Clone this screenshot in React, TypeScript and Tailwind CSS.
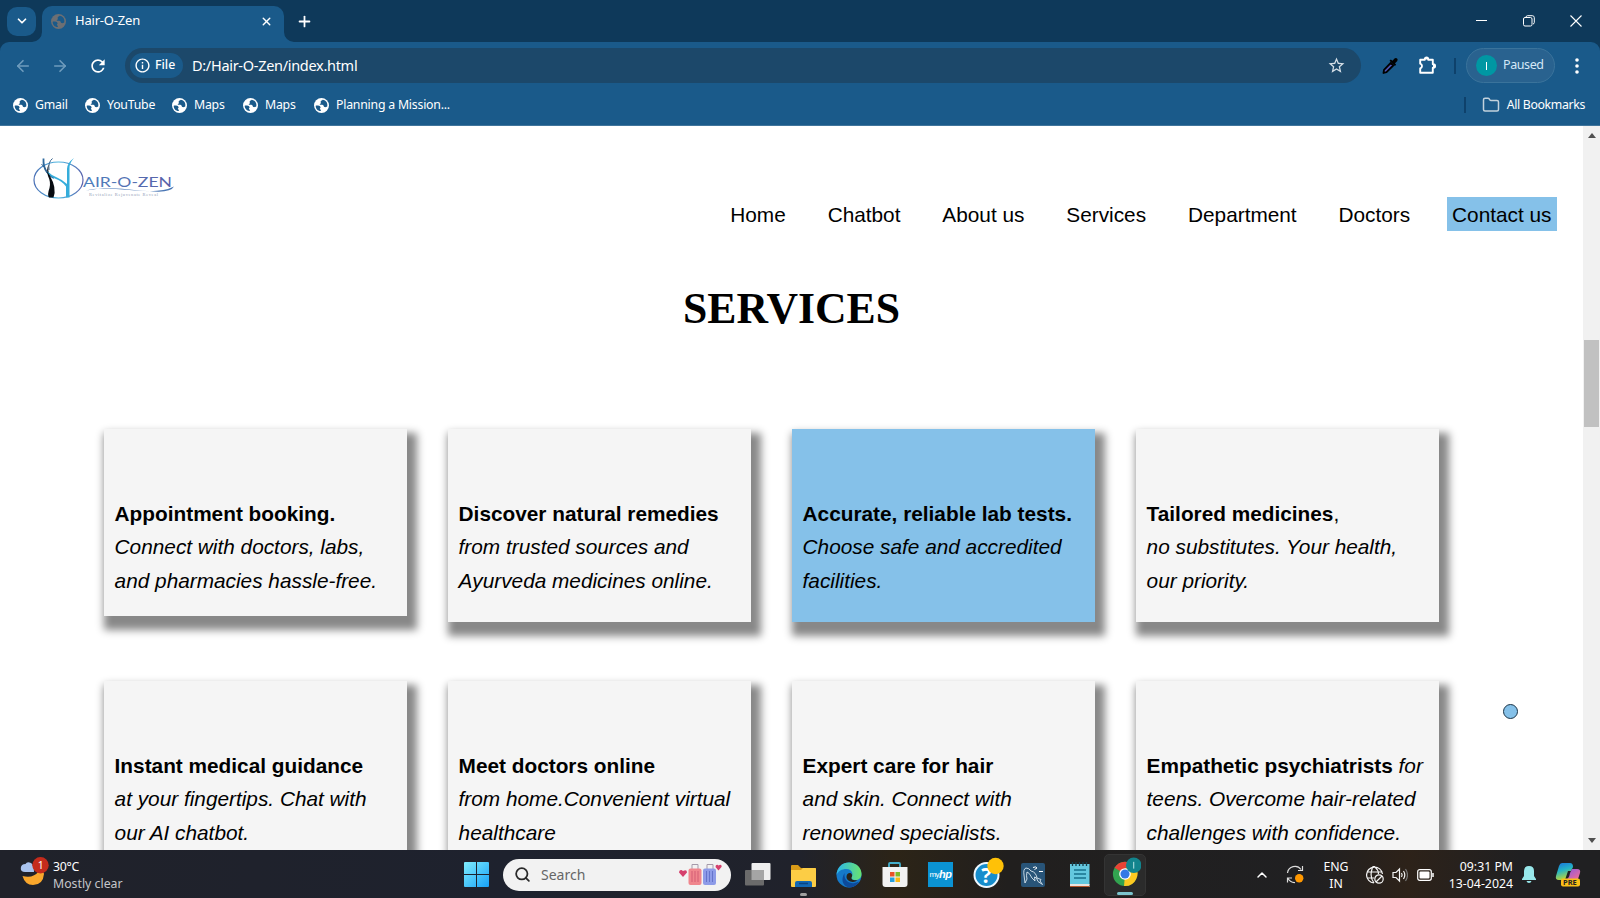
import React from "react";
import { ChevronDown, X, Plus, ArrowLeft, ArrowRight, Search, ChevronUp, Folder } from "lucide-react";
import { MdRefresh, MdInfoOutline, MdStarBorder } from "react-icons/md";

const Globe = ({ color = "#fff", bg = "#1a5a8a" }: { color?: string; bg?: string }) => (
  <svg className="size-[15px] shrink-0" viewBox="0 0 16 16">
    <circle cx="8" cy="8" r="8" fill={color} />
    <path d="M1.800 8.200C4 8 6 8.200 6.800 9.300c.5.9.1 1.500-.6 1.700.3 1.200 1 1.300 1.200 2.800-3.300.2-5.700-2.300-5.600-5.600ZM9.300 1.800c-.6 1-1.900.8-2.200 1.900-.3.900.7 1.500 0 2.200-.5.600-1.100.5-.9 1.300 1.500.3 2.700-.2 3.700.6.700.700.300 1.700 1.300 1.900 1.300.2 1.900-.3 2.900-.6C15 5.500 12.900 2.400 9.300 1.800Z" fill={bg} />
  </svg>
);

const bookmarks = [
  { t: "Gmail", w: "w-[72px]" },
  { t: "YouTube", w: "w-[87px]" },
  { t: "Maps", w: "w-[71px]" },
  { t: "Maps", w: "w-[71px]" },
  { t: "Planning a Mission...", w: "w-[150px]" },
];

const nav = ["Home", "Chatbot", "About us", "Services", "Department", "Doctors"];

type Card = { title: string; tail?: string; tailPlain?: boolean; lines: string[]; active?: boolean; short?: boolean };
const cards: Card[] = [
  { title: "Appointment booking.", lines: ["Connect with doctors, labs,", "and pharmacies hassle-free."], short: true },
  { title: "Discover natural remedies", lines: ["from trusted sources and", "Ayurveda medicines online."] },
  { title: "Accurate, reliable lab tests.", lines: ["Choose safe and accredited", "facilities."], active: true },
  { title: "Tailored medicines", tail: ",", tailPlain: true, lines: ["no substitutes. Your health,", "our priority."] },
  { title: "Instant medical guidance", lines: ["at your fingertips. Chat with", "our AI chatbot."] },
  { title: "Meet doctors online", lines: ["from home.Convenient virtual", "healthcare"] },
  { title: "Expert care for hair", lines: ["and skin. Connect with", "renowned specialists."] },
  { title: "Empathetic psychiatrists", tail: " for", lines: ["teens. Overcome hair-related", "challenges with confidence."] },
];

function TitleBar() {
  return (
    <div className="flex h-[42px] items-stretch bg-[#0e395a] text-white">
      <div className="flex w-[42px] items-center pl-[7px]">
        <div className="flex size-[29px] items-center justify-center rounded-[10px] bg-[#1a5a8a]">
          <ChevronDown className="size-[14px]" strokeWidth={3} />
        </div>
      </div>
      <div className="relative mt-[6px] flex w-[242px] items-center rounded-t-[10px] bg-[#1a5a8a] pb-[6px] pl-[9px] pr-[11px]">
        <Globe color="#6d6f73" />
        <span className="ml-[9px] flex-1 text-[13px] tracking-[-0.2px]">Hair-O-Zen</span>
        <X className="size-[13px]" strokeWidth={2.600} />
        <svg className="absolute -left-[10px] bottom-0 size-[10px]" viewBox="0 0 10 10"><path d="M10 0v10H0A10 10 0 0 0 10 0Z" fill="#1a5a8a" /></svg>
        <svg className="absolute -right-[10px] bottom-0 size-[10px]" viewBox="0 0 10 10"><path d="M0 0v10h10A10 10 0 0 1 0 0Z" fill="#1a5a8a" /></svg>
      </div>
      <div className="flex flex-1 items-center pl-[12px]">
        <Plus className="size-[17px]" strokeWidth={2.500} />
      </div>
      <div className="flex items-center gap-[35px] pr-[18px]">
        <svg className="size-[12px]" viewBox="0 0 12 12" stroke="#fff"><path d="M0 5.500h11" /></svg>
        <svg className="size-[12px]" viewBox="0 0 12 12" fill="none" stroke="#fff" strokeWidth="1"><rect x=".5" y="2.500" width="8.500" height="8.500" rx="1.500" /><path d="M3 2.500V2Q3.200.7 4.500.7H9.300Q11.300.7 11.300 2.700V7.500Q11.300 8.800 10 9" /></svg>
        <svg className="size-[12px]" viewBox="0 0 12 12" stroke="#fff" strokeWidth="1.100"><path d="M.5.5l11 11M11.500.5l-11 11" /></svg>
      </div>
    </div>
  );
}

function Toolbar() {
  return (
    <div className="bg-[#0e395a]">
      <div className="flex h-[48px] items-center rounded-t-[9px] bg-[#1a5a8a] pb-px text-white">
        <ArrowLeft className="ml-[14px] size-[18px] text-[#6f9cbd]" strokeWidth={2.200} />
        <ArrowRight className="ml-[19px] size-[18px] text-[#6f9cbd]" strokeWidth={2.200} />
        <MdRefresh className="ml-[19px] size-[20px]" />
        <div className="ml-[17px] flex h-[35px] w-[1236px] items-center rounded-full bg-[#1c486a] pl-[5px] pr-[15px]">
          <div className="flex h-[25px] w-[53px] items-center rounded-full bg-[#1a5a8a] pl-[4px] text-[12.300px] font-medium">
            <MdInfoOutline className="mr-[4px] size-[17px]" />File
          </div>
          <span className="ml-[9px] flex-1 text-[14.500px] tracking-[-0.3px]">D:/Hair-O-Zen/index.html</span>
          <MdStarBorder className="size-[19px] text-[#d4dee6]" />
        </div>
        <svg className="ml-[20px] size-[18px]" viewBox="0 0 18 18"><path d="M2.500 16 3 12.800 9.700 6l2.500 2.500L5.500 15.200Z" fill="#5055b8" stroke="#000" strokeWidth="1.800" strokeLinejoin="round" /><path d="m8.500 3.800 1.300-1.300 1.700 1.300 2-2.200q1.400-1.200 2.600 0t0 2.700l-2.100 2 1.100 1.500-1.300 1.300Z" fill="#000" /></svg>
        <svg className="ml-[19px] size-[19px]" viewBox="0 0 19 19"><path d="M2.200 3.700h4.600v-.6a1.700 1.700 0 0 1 3.400 0v.6h4.600v4.600h.6a1.700 1.700 0 0 1 0 3.400h-.6v5H2.200v-4.200a2.500 2.500 0 0 0 0-4.800Z" fill="none" stroke="#fff" strokeWidth="1.900" strokeLinejoin="round" /><path d="M6.500 3.500a2 2 0 0 1 4 0ZM15 8a2 2 0 0 1 0 4Z" fill="#fff" /></svg>
        <div className="ml-[17px] h-[16px] w-[2px] bg-[#0e416b]" />
        <div className="ml-[10px] flex h-[35px] w-[89px] items-center rounded-full border border-[#3a739b] bg-[#29628f] pl-[9px] text-[12.500px] tracking-[-0.4px] text-[#d4e7f7]">
          <span className="mr-[6px] flex size-[21px] items-center justify-center rounded-full bg-[#0097a3] font-['Open_Sans',sans-serif] text-[11px] text-white"><span className="h-[8px] w-px bg-white" /></span>Paused
        </div>
        <svg className="ml-[20px] h-[16px] w-[4px]" viewBox="0 0 4 16" fill="#fff"><circle cx="2" cy="2" r="1.800" /><circle cx="2" cy="8" r="1.800" /><circle cx="2" cy="14" r="1.800" /></svg>
      </div>
      <div className="flex h-[36px] items-center border-b border-[#40759c] bg-[#1a5a8a] pb-[5px] pl-[13px] text-[12.300px] tracking-[-0.22px] text-white">
        {bookmarks.map((b, i) => (
          <div key={i} className={"flex shrink-0 items-center gap-[7px] whitespace-nowrap " + b.w}><Globe />{b.t}</div>
        ))}
        <div className="ml-auto h-[16px] w-[2px] bg-[#0e416b]" />
        <Folder className="ml-[16px] mr-[7px] size-[18px] text-[#c2d2dd]" />
        <span className="mr-[15px] tracking-[-0.35px]">All Bookmarks</span>
      </div>
    </div>
  );
}

function Logo() {
  return (
    <svg className="ml-[32px] mt-[29px] h-[46px] w-[145px] shrink-0" viewBox="0 0 145 46">
      <defs>
        <linearGradient id="ring"><stop stopColor="#4a6fb5" /><stop offset=".5" stopColor="#4fb9e2" /><stop offset="1" stopColor="#5a62ad" /></linearGradient>
        <linearGradient id="word"><stop stopColor="#4c80bd" /><stop offset="1" stopColor="#5a5fa8" /></linearGradient>
      </defs>
      <ellipse cx="26.500" cy="25" rx="24.500" ry="18" fill="none" stroke="url(#ring)" strokeWidth="1.200" />
      <path d="M11.500 3.500Q11 12 15 17T22 23" fill="none" stroke="#2f6a9e" strokeWidth="1.800" />
      <path d="M9.500 9Q13 12 15 18M20.500 3.500Q16 7 17 15" fill="none" stroke="#34618c" strokeWidth="1" />
      <path d="M17 9Q15 15 18 21 25 33 21.500 42.500H17Q15 40 17.500 33 19 27 16 21 14 14 17 9Z" fill="#070b10" />
      <path d="M15 16Q18 22 24 24T34 31.500V42.500H37.500V13Q37.500 8 42 3 35 8 35 14V29Q31 25 25 22.500T15 16Z" fill="#35addb" />
      <text x="51" y="31.500" fontFamily="Lato, sans-serif" fontSize="14" fill="url(#word)" textLength="89" lengthAdjust="spacingAndGlyphs">AIR-O-ZEN</text>
      <path d="M54 35.500Q76 31.500 102 35T142 31.500Q139 37.500 122 36.500T84 34 54 35.500Z" fill="#4c78b5" />
      <text x="57" y="40.500" fontFamily="Liberation Serif, serif" fontSize="4.500" fill="#93a1b8" textLength="69">Revitalize Rejuvenate Reveal</text>
    </svg>
  );
}

function ServiceCard({ c }: { c: Card }) {
  return (
    <div className={"w-[302.500px] shrink-0 whitespace-nowrap pl-[10.600px] pt-[68px] text-[20.800px] leading-[33.300px] shadow-[5px_9px_8px_5px_#888] " + (c.short ? "h-[187px] " : "h-[193px] ") + (c.active ? "bg-[#85c1e9]" : "bg-[#f5f5f5]")}>
      <p><b>{c.title}</b>{c.tail && (c.tailPlain ? c.tail : <i>{c.tail}</i>)}</p>
      {c.lines.map((l) => <p key={l} className="italic">{l}</p>)}
    </div>
  );
}

function Page() {
  return (
    <div className="flex h-[724px] overflow-hidden bg-white font-['Liberation_Sans',sans-serif] text-black">
      <div className="relative w-[1583px] shrink-0 overflow-hidden">
        <div className="flex h-[124px]">
          <Logo />
          <nav className="ml-auto mr-[26.500px] mt-[71px] flex h-[34px] gap-[31.900px] text-[20.800px] leading-[35px]">
            {nav.map((n) => <a key={n} className="px-[5px]">{n}</a>)}
            <a className="bg-[#85c1e9] px-[5px]">Contact us</a>
          </nav>
        </div>
        <h1 className="mt-[32px] h-[54px] text-center font-['Liberation_Serif',serif] text-[43.700px] font-bold leading-[52px]">SERVICES</h1>
        <div className="ml-[104px] mt-[93px] grid w-max grid-cols-4 items-start gap-x-[41.500px] gap-y-[59px]">
          {cards.map((c) => <ServiceCard key={c.title} c={c} />)}
        </div>
        <div className="absolute left-[1503px] top-[578px] size-[15px] rounded-full border border-[#1b3447] bg-[#85c1e9]" />
      </div>
      <div className="flex flex-1 flex-col items-center bg-[#f1f1f1]">
        <svg className="mt-[7px] h-[5px] w-[8px]" viewBox="0 0 8 5"><path d="M0 5 4 0l4 5Z" fill="#505050" /></svg>
        <div className="mt-[202px] h-[87px] w-[15px] bg-[#c1c1c1]" />
        <svg className="mb-[7px] mt-auto h-[5px] w-[8px]" viewBox="0 0 8 5"><path d="M0 0h8L4 5Z" fill="#505050" /></svg>
      </div>
    </div>
  );
}

function Taskbar() {
  return (
    <div className="flex h-[48px] items-center bg-[linear-gradient(90deg,#20222a,#1e222e_32%,#20222b_50%,#2c2417_56%,#211f1e_63%,#202022_82%,#2d2219_88%,#202022_95%)] pt-px text-[12.300px] text-white">
      <div className="flex w-[464px] items-center pl-[20px]">
        <svg className="h-[32px] w-[30px] -translate-y-[2px]" viewBox="0 0 30 32"><path d="M2.500 19Q13 22 19 14q5 0 5 3-1 11-11 11-8 0-10.500-9Z" fill="#f9a72c" /><path d="M5 15Q.500 15 .8 11T5.500 7Q7 4 11 6q3 2 3 9Z" fill="#a9c3ee" /><circle cx="20.500" cy="8.200" r="8.200" fill="#c42b1c" /><text x="17.700" y="12" fontSize="10.500" fill="#fff" fontFamily="Noto Sans">1</text></svg>
        <div className="ml-[3px] leading-[17px]"><p className="tracking-[-0.3px]">30°C</p><p className="text-[#c5c6ca]">Mostly clear</p></div>
      </div>
      <svg className="size-[25px]" viewBox="0 0 25 25"><defs><linearGradient id="win" x2="1" y2="1"><stop stopColor="#80edfd" /><stop offset="1" stopColor="#17a1f7" /></linearGradient></defs><path d="M1 0H12V12H0V1Q0 0 1 0ZM13 0H24Q25 0 25 1V12H13ZM0 13H12V25H1Q0 25 0 24ZM13 13H25V24Q25 25 24 25H13Z" fill="url(#win)" /></svg>
      <div className="ml-[14px] flex h-[32px] w-[228px] items-center rounded-full bg-[#f2f2f2] pl-[11px] pr-[9px] text-[14px] text-[#666]">
        <Search className="mr-[10px] size-[17px] text-[#2a2a2a]" strokeWidth={2.500} />
        <span className="flex-1">Search</span>
        <svg className="h-[24px] w-[43px]" viewBox="0 0 43 24">
          <path d="M4 14 0 9.500q0-3 2.500-2.500L4 8q4-2 4 1.500Z" fill="#d5406d" /><path d="M39.500 7.500 36.500 4q0-2.500 2-2.200l1 .7q3.200-1.700 3.200 1.200Z" fill="#d5406d" />
          <path d="M13 6V1.500h6V6M28 6V1.500h6V6" fill="none" stroke="#a59aaa" strokeWidth="1" />
          <rect x="9.500" y="5.500" width="13" height="16.500" rx="2" fill="#f0868d" /><path d="M13 8v11M16 8v11M19 8v11" stroke="#d45d74" />
          <rect x="24" y="5.500" width="13" height="16.500" rx="2" fill="#8d9be8" /><path d="M27.500 8v11M30.500 8v11M33.500 8v11" stroke="#6574cb" />
        </svg>
      </div>
      <svg className="ml-[14px] h-[25px] w-[26px]" viewBox="0 0 26 25"><rect x="6.500" y="1" width="19" height="17" rx="1" fill="#eee" /><rect x="0" y="8" width="19" height="15.500" rx="1" fill="#6b6b6b" /><path d="M6.500 8H19v10H6.500Z" fill="#a5a5a5" /></svg>
      <div className="relative ml-[19px] h-[48px] w-[27px]">
        <svg className="mt-[14px] h-[24px] w-[27px]" viewBox="0 0 27 24"><path d="M1 1Q1 0 2 0H8l3 3H25q1 0 1 1V12H1Z" fill="#d99b17" /><path d="M1 5H11l2-2H25q1 0 1 1V21q0 1-1 1H2q-1 0-1-1Z" fill="#fccd45" /><path d="M5 22V18q0-2 2-2H20q2 0 2 2v4Z" fill="#1268b4" /><path d="M9 18.500h9" stroke="#0a4380" strokeWidth="1.500" /></svg>
        <div className="absolute bottom-[3px] left-[10px] h-[3px] w-[7px] rounded bg-[#a0a0a0]" />
      </div>
      <svg className="ml-[19px] size-[26px]" viewBox="0 0 26 26"><defs><linearGradient id="e1" x2="1"><stop stopColor="#2bb5ec" /><stop offset="1" stopColor="#69e36e" /></linearGradient></defs><circle cx="13" cy="13" r="12.500" fill="#1579c9" /><path d="M.5 13C1 5 6.500.5 13 .5 20 .5 25.500 5.500 25.500 12c0 4-3 6-6 6s-5-1-4-3c2-2 1-8-5-8-5 0-8 2-10 6Z" fill="url(#e1)" /><path d="M8.500 13.500c0 5 5 8.500 10 7.500 3-.5 4-1.500 4.500-1.500C21 24 16 26 12 25.300 6 23 5 17 8.500 11Z" fill="#0d4a9b" /><path d="M14.500 11c2 1 2 3 1 4.500-.5 2 1.500 3.500 6 2.500-4 4-11 1-11-3 0-3 2-4.500 4-4Z" fill="#28241a" /></svg>
      <svg className="ml-[20px] size-[26px]" viewBox="0 0 26 26"><path d="M7 7V2q0-1 1-1H17q1 0 1 1V7" fill="none" stroke="#43aecb" strokeWidth="1.800" /><path d="M.5 5H25.500V22q0 3-3 3H3.500q-3 0-3-3Z" fill="#f2f2f2" /><path d="M8 10h4.500v4.500H8Z" fill="#e95128" /><path d="M13.500 10H18v4.500H13.500Z" fill="#7fba28" /><path d="M8 15.500h4.500V20H8Z" fill="#25a0df" /><path d="M13.500 15.500H18V20H13.500Z" fill="#fbb813" /></svg>
      <div className="ml-[20px] flex size-[25px] items-center justify-center bg-[#0b93d3] font-['Liberation_Sans',sans-serif] italic tracking-[-0.5px]"><span className="text-[8px] not-italic">my</span><b className="text-[11px]">hp</b></div>
      <svg className="ml-[20px] h-[32px] w-[31px] -translate-y-[2px]" viewBox="0 0 31 32"><circle cx="13.500" cy="18" r="12" fill="#168dcc" stroke="#eef8ff" strokeWidth="2" /><text x="8.300" y="25.500" fontSize="21" fontWeight="700" fill="#fff" fontFamily="Noto Sans">?</text><circle cx="22.500" cy="9" r="8.200" fill="#ffc107" /></svg>
      <svg className="ml-[17px] size-[24px]" viewBox="0 0 24 24"><rect width="24" height="24" rx="2" fill="#285478" /><path d="M4 20 3 12Q2 6 5 5q3 0 5 3 5 1 6 7l4 1.500-1 1.500 2.500 3.500-4.500-3q-1.500-5-3.500-4.500l.5 4-3-3Q8 9 6 9Q5 13 6 16Z" fill="none" stroke="#d9e6ef" strokeWidth=".9" /><path d="M12 4.500q3-1.500 4 .5l-2.500 1.500M18 8.500h4" stroke="#fff" fill="none" /></svg>
      <svg className="ml-[25px] h-[26px] w-[20px]" viewBox="0 0 20 26"><path d="M0 2H19.500V23H0Z" fill="#63c8df" /><path d="M0 22H19.500V25H0Z" fill="#e8e3df" /><path d="M0 24.500H19.500" stroke="#b8562b" /><path d="M2.500 0v4M6 0v4M9.500 0v4M13 0v4M16.500 0v4" stroke="#163d4a" strokeWidth="1.300" /><path d="M4 8h12M4 12h12M4 16h12" stroke="#18718d" strokeWidth="1.500" /></svg>
      <div className="relative ml-[14px] flex h-[42px] w-[42px] justify-center rounded-[5px] border border-[#343434] bg-[#2b2b2b]">
        <svg className="mt-[2px] h-[31px] w-[32px]" viewBox="0 0 32 32"><circle cx="16" cy="17.500" r="12.500" fill="#32a350" /><path d="M16 17.500 5.200 11.200Q9 5 16 5T26.800 11.200H16Z" fill="#e94335" /><path d="M16 17.500 15 30Q24 30.500 27.500 23T26.800 11.500H16Z" fill="#fdc921" /><circle cx="16" cy="17.500" r="6" fill="#fff" /><circle cx="16" cy="17.500" r="4.700" fill="#3478e5" /><circle cx="25" cy="8.500" r="8" fill="#12848d" /><path d="M25 5v7" stroke="#c0e8e8" /></svg>
        <div className="absolute bottom-0 h-[3px] w-[16px] rounded bg-[#7cc6cf]" />
      </div>
      <ChevronUp className="ml-[108px] size-[16px]" strokeWidth={2.200} />
      <svg className="ml-[16px] size-[19px]" viewBox="0 0 19 19" fill="none" stroke="#ddd" strokeWidth="1.200"><path d="M1.500 8A7.500 7.500 0 0 1 15 4.500M16.500 1v4.500H12M1.500 17.500V13H6M2 13.500Q5 18 9 17.500" /><circle cx="13.200" cy="13.200" r="4.200" fill="#ff9800" stroke="none" /></svg>
      <div className="ml-[15px] w-[32px] text-center leading-[17px]"><p>ENG</p><p>IN</p></div>
      <svg className="ml-[14px] size-[18px]" viewBox="0 0 18 18" fill="none" stroke="#f4f4f4" strokeWidth="1.200"><path d="M8 17A8 8 0 1 1 16.500 8M1.500 6h15M1.500 12H8M8 17Q4 12 5.500 5T8.800 1M9 1q3.500 3 3.500 7" /><circle cx="13" cy="13" r="4.200" /><path d="m10 16 6-6" /></svg>
      <svg className="ml-[8px] h-[16px] w-[16px]" viewBox="0 0 16 16" fill="none" stroke="#f4f4f4" strokeWidth="1.200"><path d="M1 5.500H4L7.500 2v12L4 10.500H1ZM9.500 6q1.300 2 0 4M11.500 4q2.600 4 0 8" /><path d="M13.500 2q4 6 0 12" stroke="#777" /></svg>
      <svg className="ml-[9px] h-[12px] w-[17px]" viewBox="0 0 17 12"><rect x=".7" y=".7" width="13.600" height="10.600" rx="2" fill="none" stroke="#fff" strokeWidth="1.200" /><rect x="2.500" y="2.500" width="10" height="7" rx="1" fill="#fff" /><path d="M16 4v4" stroke="#fff" strokeWidth="1.500" /></svg>
      <div className="ml-auto mr-[9px] whitespace-nowrap text-right leading-[17px]"><p>09:31 PM</p><p>13-04-2024</p></div>
      <svg className="h-[17px] w-[14px]" viewBox="0 0 14 17" fill="#98e8eb"><path d="M7 0Q12 0 12 5V10l2 3v1H0V13l2-3V5Q2 0 7 0ZM4.500 15h5Q9 17 7 17T4.500 15Z" /></svg>
      <svg className="ml-[19px] mr-[19px] h-[26px] w-[26px]" viewBox="0 0 26 26"><defs><linearGradient id="c1" y2="1" x2=".3"><stop stopColor="#1872de" /><stop offset=".5" stopColor="#25b5c4" /><stop offset="1" stopColor="#b8d53b" /></linearGradient><linearGradient id="c2" y2="1"><stop stopColor="#8b58df" /><stop offset="1" stopColor="#f56d91" /></linearGradient></defs><path d="M7 1H15q3 0 3 4l-2 4H13L10 18H4Q0 18 1 14L4 4Q5 1 7 1Z" fill="url(#c1)" /><path d="M17 7H22q4 0 3 4l-2 6H11Q14 17 15 11Z" fill="url(#c2)" /><rect x="6" y="16.500" width="19" height="8" rx="2" fill="#fbbf17" /><text x="8" y="23.300" fontSize="7.500" fontWeight="700" fill="#222" fontFamily="Noto Sans">PRE</text></svg>
    </div>
  );
}

export default function App() {
  return (
    <div className="flex h-[898px] w-[1600px] flex-col overflow-hidden font-['Noto_Sans',sans-serif]">
      <TitleBar />
      <Toolbar />
      <Page />
      <Taskbar />
    </div>
  );
}
